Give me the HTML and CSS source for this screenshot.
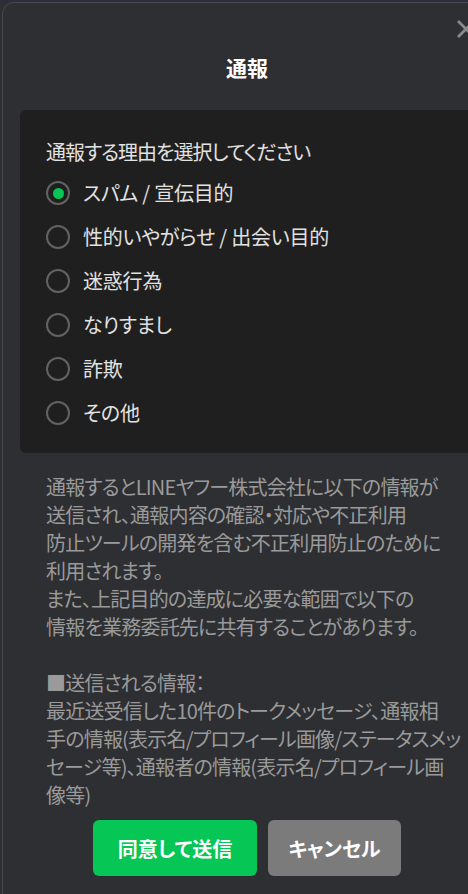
FILE: index.html
```html
<!DOCTYPE html>
<html lang="ja">
<head>
<meta charset="utf-8">
<title>通報</title>
<link rel="stylesheet" href="styles.css">
</head>
<body>
<div class="dialog">
  <button class="close" aria-label="閉じる">
    <svg viewBox="0 0 18 18" width="18" height="18"><path d="M2 2 L16 16 M16 2 L2 16" stroke="#8a8a8a" stroke-width="2.8" stroke-linecap="square" fill="none"/></svg>
  </button>
  <h1 class="title">通報</h1>
  <div class="reasons">
    <p class="reasons-label">通報する理由を選択してください</p>
    <ul class="options">
      <li class="option"><span class="radio checked"></span><span class="option-text">スパム / 宣伝目的</span></li>
      <li class="option"><span class="radio"></span><span class="option-text">性的いやがらせ / 出会い目的</span></li>
      <li class="option"><span class="radio"></span><span class="option-text">迷惑行為</span></li>
      <li class="option"><span class="radio"></span><span class="option-text">なりすまし</span></li>
      <li class="option"><span class="radio"></span><span class="option-text">詐欺</span></li>
      <li class="option"><span class="radio"></span><span class="option-text">その他</span></li>
    </ul>
  </div>
  <p class="notice">通報するとLINEヤフー株式会社に以下の情報が<br>送信され、通報内容の確認・対応や不正利用<br>防止ツールの開発を含む不正利用防止のために<br>利用されます。<br>また、上記目的の達成に必要な範囲で以下の<br>情報を業務委託先に共有することがあります。<br><br>■送信される情報：<br>最近送受信した10件のトークメッセージ、通報相<br>手の情報(表示名/プロフィール画像/ステータスメッ<br>セージ等)、通報者の情報(表示名/プロフィール画<br>像等)</p>
  <div class="actions">
    <button class="btn btn-primary">同意して送信</button>
    <button class="btn btn-secondary">キャンセル</button>
  </div>
</div>
</body>
</html>
```
FILE: styles.css
```css
html, body {
  margin: 0;
  padding: 0;
  overflow: hidden;
}
body {
  width: 468px;
  height: 894px;
  background: linear-gradient(to bottom, #2c2c3e 0, #2c2c3e 2px, #2e2f32 2px);
  font-family: "Noto Sans CJK JP", "Noto Sans", sans-serif;
  font-feature-settings: "palt";
}
.dialog {
  position: relative;
  box-sizing: border-box;
  width: 490px;
  min-height: 910px;
  margin: 2px 0 0 2px;
  padding: 49px 17px 0 17px;
  background: #2e2f32;
  border: 1px solid #48494d;
  border-radius: 12px;
}
.close {
  position: absolute;
  top: 17px;
  right: 16px;
  width: 18px;
  height: 18px;
  padding: 0;
  border: 0;
  background: none;
  display: flex;
}
.title {
  margin: 0 0 28px;
  font-size: 21px;
  line-height: 30px;
  font-weight: 700;
  color: #ffffff;
  text-align: center;
}
.reasons {
  background: #1f1f1f;
  border-radius: 6px;
  padding: 28px 26px 18px;
}
.reasons-label {
  margin: 0;
  font-size: 20px;
  line-height: 28px;
  letter-spacing: -1px;
  color: #e2e2e2;
}
.options {
  list-style: none;
  margin: 5px 0 0;
  padding: 0;
}
.option {
  height: 44px;
  display: flex;
  align-items: center;
  gap: 13px;
}
.radio {
  box-sizing: border-box;
  width: 24px;
  height: 24px;
  border: 2px solid #626262;
  border-radius: 50%;
  display: flex;
  align-items: center;
  justify-content: center;
  flex: none;
}
.radio.checked::after {
  content: "";
  width: 11px;
  height: 11px;
  border-radius: 50%;
  background: #06c755;
}
.option-text {
  font-size: 20px;
  line-height: 28px;
  letter-spacing: -0.2px;
  color: #e2e2e2;
}
.notice {
  margin: 20px 0 0;
  padding: 0 26px;
  font-size: 20px;
  line-height: 28px;
  letter-spacing: -0.8px;
  color: #9a9a9a;
  white-space: nowrap;
}
.actions {
  margin-top: 11px;
  display: flex;
  justify-content: center;
  gap: 11px;
}
.btn {
  height: 56px;
  border: 0;
  border-radius: 6px;
  font-family: inherit;
  font-feature-settings: "palt";
  font-size: 20px;
  font-weight: 700;
  color: #ffffff;
  padding: 0;
}
.btn-primary {
  width: 164px;
  background: #06c755;
}
.btn-secondary {
  width: 133px;
  background: #7b7b7b;
}
```
